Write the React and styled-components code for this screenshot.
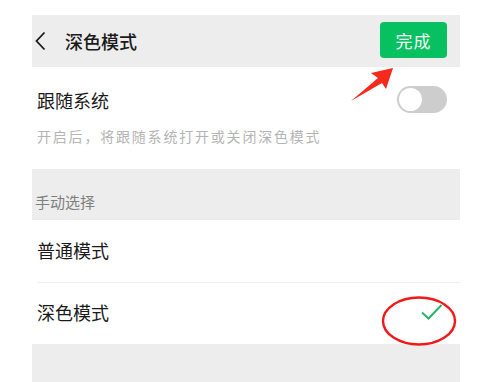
import React, { useState } from 'react'
import styled, { createGlobalStyle } from 'styled-components'

const GlobalStyle = createGlobalStyle`
  html, body {
    margin: 0;
    padding: 0;
    background: #ffffff;
  }
  body {
    font-family: "Noto Sans CJK SC", "Noto Sans", sans-serif;
    color: #1a1a1a;
  }
`

const Page = styled.div`
  position: relative;
  width: 484px;
  height: 382px;
  overflow: hidden;
  padding: 15px 24px 0 32px;
  box-sizing: border-box;
`

const Panel = styled.div`
  width: 428px;
  display: flex;
  flex-direction: column;
`

const Header = styled.div`
  height: 52px;
  background: #ededed;
  display: flex;
  align-items: center;
  padding: 0 13px 0 2px;
`

const Back = styled.button`
  border: none;
  background: transparent;
  padding: 0;
  width: 12px;
  height: 22px;
  display: flex;
  align-items: center;
  justify-content: center;
`

const Title = styled.h1`
  margin: 0 0 0 19px;
  font-size: 18px;
  font-weight: 500;
  line-height: 24px;
  color: #1a1a1a;
  flex: 1;
`

const DoneButton = styled.button`
  width: 67px;
  height: 36px;
  border: none;
  border-radius: 4px;
  background: #07c160;
  color: #f4fff8;
  font-family: inherit;
  font-size: 17px;
  letter-spacing: 1px;
  margin-top: -2px;
`

const FollowBlock = styled.div`
  padding: 19px 13px 23px 5px;
  background: #fff;
`

const FollowRow = styled.div`
  display: flex;
  align-items: center;
  justify-content: space-between;
`

const RowLabel = styled.span`
  font-size: 18px;
  line-height: 24px;
  color: #1a1a1a;
`

const Hint = styled.p`
  margin: 13px 0 0;
  font-size: 14px;
  line-height: 20px;
  letter-spacing: 1.8px;
  color: #b4b4b4;
`

const Switch = styled.button`
  position: relative;
  width: 50px;
  height: 27px;
  border-radius: 14px;
  border: none;
  padding: 0;
  background: ${p => (p.$on ? '#07c160' : '#cdcdcd')};

  &::after {
    content: '';
    position: absolute;
    top: 2px;
    left: ${p => (p.$on ? '25px' : '2px')};
    width: 23px;
    height: 23px;
    border-radius: 50%;
    background: #fff;
  }
`

const GroupLabel = styled.div`
  background: #ededed;
  padding: 23px 0 8px 3px;
  font-size: 15px;
  line-height: 20px;
  color: #7f7f7f;
`

const OptionRow = styled.div`
  height: 62px;
  display: flex;
  align-items: center;
  justify-content: space-between;
  padding: 0 17px 3px 5px;
  box-sizing: border-box;
  position: relative;
  background: #fff;

  & + &::before {
    content: '';
    position: absolute;
    top: 0;
    left: 5px;
    right: 0;
    height: 1px;
    background: #efefef;
  }
`

const Filler = styled.div`
  height: 40px;
  background: #ededed;
`

const Overlay = styled.svg`
  position: absolute;
  left: 0;
  top: 0;
  pointer-events: none;
`

const options = ['普通模式', '深色模式']

export default function App() {
  const [follow, setFollow] = useState(false)
  const [mode] = useState('深色模式')

  return (
    <Page>
      <GlobalStyle />
      <Panel>
        <Header>
          <Back aria-label="返回">
            <svg width="11" height="20" viewBox="0 0 11 20">
              <path d="M9.5 1.5 L1.5 10 L9.5 18.5" fill="none" stroke="#1a1a1a" strokeWidth="1.8" />
            </svg>
          </Back>
          <Title>深色模式</Title>
          <DoneButton>完成</DoneButton>
        </Header>

        <FollowBlock>
          <FollowRow>
            <RowLabel>跟随系统</RowLabel>
            <Switch $on={follow} onClick={() => setFollow(!follow)} />
          </FollowRow>
          <Hint>开启后，将跟随系统打开或关闭深色模式</Hint>
        </FollowBlock>

        <GroupLabel>手动选择</GroupLabel>

        {options.map(o => (
          <OptionRow key={o}>
            <RowLabel>{o}</RowLabel>
            {mode === o && (
              <svg width="22" height="16" viewBox="0 0 22 16">
                <path d="M1 8.5 L7.5 14.5 L20.5 1" fill="none" stroke="#2db46a" strokeWidth="2" />
              </svg>
            )}
          </OptionRow>
        ))}

        <Filler />
      </Panel>

      <Overlay width="484" height="382" viewBox="0 0 484 382">
        <polygon points="393,68 371,73 378,78 351,101 382,83 386,89" fill="#f62a1c" />
        <ellipse cx="419" cy="321" rx="36" ry="23.5" fill="none" stroke="#f01818" strokeWidth="2.4" />
      </Overlay>
    </Page>
  )
}
